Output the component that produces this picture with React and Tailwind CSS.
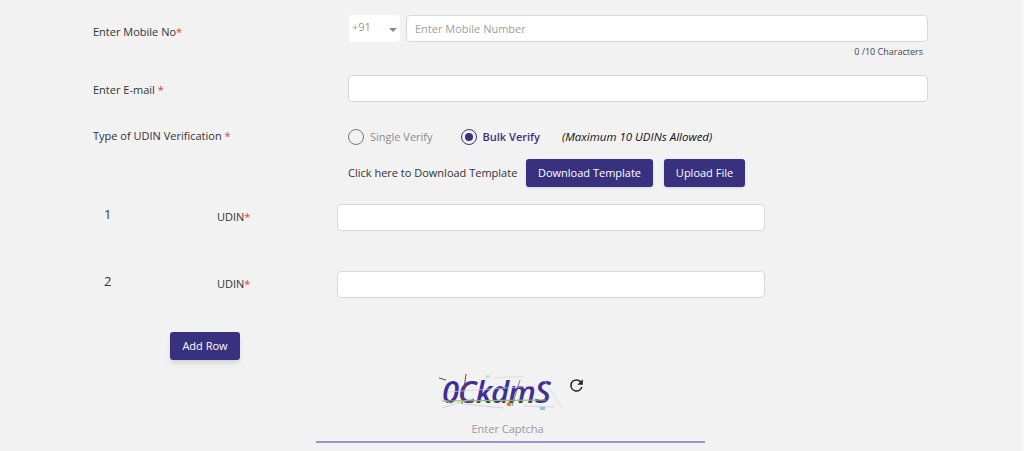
const font = "font-['Open_Sans',sans-serif]";

function Req({ children }) {
  return <span className="text-[#e53935]">{children}</span>;
}

function UdinRow({ num, last }) {
  return (
    <div className={`flex h-[27px] items-center ${last ? "" : "mb-[40px]"}`}>
      <div className="w-[124px] pl-[11px] text-[13px] text-[#333] -translate-y-[3px] leading-none">{num}</div>
      <div className="w-[120px] text-[11px] text-[#333]">
        UDIN<Req>*</Req>
      </div>
      <div className="h-[27px] w-[428px] rounded-[4px] border border-[#d8d8d8] bg-white" />
    </div>
  );
}

function Captcha() {
  return (
    <div className="relative h-[40px] w-[130px]">
      <span className="absolute left-[8px] top-[-1px] text-[31px] leading-[40px] tracking-[-1px] italic font-semibold text-[#3f2f96] font-['Open_Sans',sans-serif]">
        0CkdmS
      </span>
      <svg className="absolute inset-0" width="130" height="40" viewBox="0 0 130 40" fill="none">
        <path d="M5 6 L12 8 M32 2 L28 32" stroke="#7a3b3b" strokeWidth="1" />
        <path d="M8 29 L112 28" stroke="#8bc34a" strokeWidth="1.2" />
        <path d="M8 36 L40 26 M30 32 L70 36 M90 34 L120 35" stroke="#c9c3d8" strokeWidth="0.7" />
        <path d="M14 20 L100 14 M110 8 L128 36 M60 6 L90 4 M20 33 L6 26" stroke="#d6d0e2" strokeWidth="0.7" />
        <path d="M86 8 L78 34" stroke="#555" strokeWidth="0.7" />
        <circle cx="75" cy="32" r="2.2" fill="#dd7a3a" />
        <rect x="106" y="35" width="5" height="3" fill="#7ec8d8" />
        <rect x="52" y="3" width="4" height="3" fill="#bfe3dc" />
      </svg>
    </div>
  );
}

export default function App() {
  return (
    <div className={`${font} h-[451px] w-[1024px] overflow-hidden bg-[#f2f2f2] pt-[15px] border-r-2 border-[#f8f8f8]`}>
      <div className="ml-[93px] w-[835px]">
        {/* mobile */}
        <div className="flex h-[28px]">
          <div className="w-[256px] pt-[8px] text-[11px] leading-[18px] text-[#333]">
            Enter Mobile No<Req>*</Req>
          </div>
          <div className="flex h-[27px] w-[51px] justify-between rounded-[4px] bg-white pl-[3px] pr-[3px] pt-[4px] text-[11px] leading-[16px] text-[#999]">
            <span>+91</span>
            <span className="mt-[9px] h-0 w-0 border-x-[4px] border-t-[4px] border-x-transparent border-t-[#888]" />
          </div>
          <div className="ml-[6px] flex h-[27px] flex-1 items-center rounded-[4px] border border-[#d8d8d8] bg-white pl-[8px] pt-[1px] text-[11px] text-[#a0a0a0]">
            Enter Mobile Number
          </div>
        </div>
        <div className="mt-[2px] pr-[5px] text-right text-[9px] leading-[14px] text-[#444]">0 /10 Characters</div>

        {/* email */}
        <div className="mt-[16px] flex h-[27px] items-center">
          <div className="w-[255px] pt-[4px] text-[11px] text-[#333]">
            Enter E-mail <Req>*</Req>
          </div>
          <div className="h-[27px] flex-1 rounded-[4px] border border-[#d8d8d8] bg-white" />
        </div>

        {/* verification type */}
        <div className="mt-[25px] flex h-[20px] items-center">
          <div className="w-[255px] -translate-y-[1px] text-[11px] text-[#333]">
            Type of UDIN Verification <Req>*</Req>
          </div>
          <div className="flex items-center">
            <span className="h-[16px] w-[16px] rounded-full border-[1.5px] border-[#777]" />
            <span className="ml-[6px] text-[11px] text-[#8a8a8a]">Single Verify</span>
            <span className="ml-[28px] flex h-[16px] w-[16px] items-center justify-center rounded-full border-[1.5px] border-[#38317f]">
              <span className="h-[8px] w-[8px] rounded-full bg-[#38317f]" />
            </span>
            <span className="ml-[6px] text-[11px] font-semibold text-[#38317f]">Bulk Verify</span>
            <span className="ml-[22px] text-[11.5px] font-medium italic text-[#111]">(Maximum 10 UDINs Allowed)</span>
          </div>
        </div>

        {/* template */}
        <div className="ml-[255px] mt-[12px] flex h-[28px] items-center">
          <span className="w-[178px] text-[11px] text-[#333]">Click here to Download Template</span>
          <button className="h-[28px] w-[127px] rounded-[3px] bg-[#38317f] text-[11px] text-white shadow-sm">
            Download Template
          </button>
          <button className="ml-[11px] h-[28px] w-[81px] rounded-[3px] bg-[#38317f] text-[11px] text-white shadow-sm">
            Upload File
          </button>
        </div>

        {/* udin rows */}
        <div className="mt-[17px]">
          <UdinRow num="1" />
          <UdinRow num="2" last />
        </div>

        <button className="ml-[77px] mt-[34px] block h-[28px] w-[70px] rounded-[3px] bg-[#38317f] text-[11px] text-white shadow-md">
          Add Row
        </button>

        {/* captcha */}
        <div className="ml-[223px] mt-[12px] w-[389px]">
          <div className="ml-[118px] flex h-[40px]">
            <Captcha />
            <svg className="ml-[3px] mt-[4px]" width="19" height="19" viewBox="0 0 24 24" fill="#222">
              <path d="M17.65 6.35A7.96 7.96 0 0 0 12 4a8 8 0 1 0 7.73 10h-2.08A6 6 0 1 1 12 6c1.66 0 3.14.69 4.22 1.78L13 11h7V4l-2.35 2.35z" />
            </svg>
          </div>
          <div className="mt-[8px] h-[23px] border-b-2 border-[#9a95c8] pr-[6px] text-center text-[11px] leading-[18px] text-[#999]">
            Enter Captcha
          </div>
        </div>
      </div>
    </div>
  );
}
